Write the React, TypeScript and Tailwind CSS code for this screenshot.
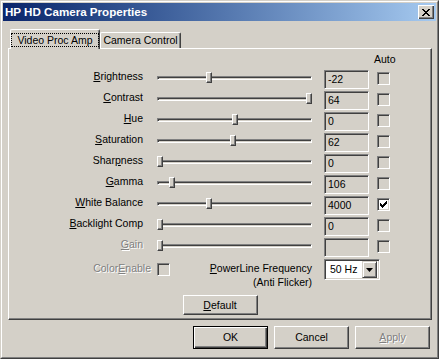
import React from 'react'

type Row = {
  label: React.ReactNode
  value: string
  pos: number
  checked?: boolean
  disabled?: boolean
}

const raised =
  'border border-t-white border-l-white border-r-[#404040] border-b-[#404040] shadow-[inset_-1px_-1px_0_#808080]'
const sunken =
  'border border-t-[#808080] border-l-[#808080] border-r-white border-b-white shadow-[inset_1px_1px_0_#404040,inset_-1px_-1px_0_#d4d0c8]'
const grayText = 'text-[#808080] [text-shadow:1px_1px_0_#fff]'

function U({ children }: { children: React.ReactNode }) {
  return <span className="underline underline-offset-[1px]">{children}</span>
}

const rows: Row[] = [
  { label: <><U>B</U>rightness</>, value: '-22', pos: 0.327 },
  { label: <><U>C</U>ontrast</>, value: '64', pos: 1 },
  { label: <><U>H</U>ue</>, value: '0', pos: 0.5 },
  { label: <><U>S</U>aturation</>, value: '62', pos: 0.487 },
  { label: <>Shar<U>p</U>ness</>, value: '0', pos: 0 },
  { label: <><U>G</U>amma</>, value: '106', pos: 0.08 },
  { label: <><U>W</U>hite Balance</>, value: '4000', pos: 0.33, checked: true },
  { label: <><U>B</U>acklight Comp</>, value: '0', pos: 0 },
  { label: <><U>G</U>ain</>, value: '', pos: 0, disabled: true },
]

const checkPixels = [
  [6], [5, 6], [0, 4, 5, 6], [0, 1, 3, 4, 5], [0, 1, 2, 3, 4], [1, 2, 3], [2],
]

const closePixels = [
  [0, 1, 6, 7], [1, 2, 5, 6], [2, 3, 4, 5], [3, 4], [2, 3, 4, 5], [1, 2, 5, 6], [0, 1, 6, 7],
]

function PixelGlyph({ rows, w }: { rows: number[][]; w: number }) {
  return (
    <svg width={w} height={rows.length} viewBox={`0 0 ${w} ${rows.length}`} shapeRendering="crispEdges">
      {rows.map((xs, y) =>
        xs.map((x) => <rect key={`${x}-${y}`} x={x} y={y} width="1" height="1" fill="#000" />)
      )}
    </svg>
  )
}

function Checkbox({ checked }: { checked?: boolean }) {
  return (
    <div
      className={`w-[13px] h-[13px] flex items-center justify-center ${sunken} ${
        checked ? 'bg-white' : 'bg-[#d4d0c8]'
      }`}
    >
      {checked && <PixelGlyph rows={checkPixels} w={7} />}
    </div>
  )
}

function Slider({ pos }: { pos: number }) {
  return (
    <div className="relative w-[155px] h-[11px] flex items-center">
      <div className="w-full h-[4px] border border-t-[#808080] border-l-[#808080] border-r-white border-b-white shadow-[inset_1px_1px_0_#404040]" />
      <div
        className={`absolute top-0 w-[6px] h-[11px] bg-[#d4d0c8] ${raised}`}
        style={{ left: Math.round(pos * 149) }}
      />
    </div>
  )
}

function Button({
  children,
  isDefault,
  disabled,
  className = '',
}: {
  children: React.ReactNode
  isDefault?: boolean
  disabled?: boolean
  className?: string
}) {
  const frame = isDefault
    ? 'border border-black shadow-[inset_1px_1px_0_#fff,inset_-1px_-1px_0_#404040,inset_-2px_-2px_0_#808080]'
    : raised
  return (
    <div
      className={`w-[75px] flex items-center justify-center bg-[#d4d0c8] ${frame} ${
        disabled ? grayText : ''
      } ${className}`}
    >
      {children}
    </div>
  )
}

export default function App() {
  return (
    <div className="w-[439px] h-[359px] bg-[#d4d0c8] font-['Liberation_Sans',Arial,sans-serif] text-[10.5px] leading-[13px] text-black select-none">
      <div className="w-full h-full border border-t-[#d4d0c8] border-l-[#d4d0c8] border-r-[#404040] border-b-[#404040]">
        <div className="w-full h-full border border-t-white border-l-white border-r-[#808080] border-b-[#808080] p-px flex flex-col">
          {/* title bar */}
          <div className="h-[18px] flex items-center bg-linear-to-r from-[#0a246a] to-[#a6caf0] pl-[2px] pr-[2px]">
            <span className="flex-1 text-white font-bold text-[11.6px] leading-[14px]">
              HP HD Camera Properties
            </span>
            <div className="w-[16px] h-[14px] flex items-center justify-center bg-[#d4d0c8] shadow-[inset_1px_1px_0_#fff,inset_-1px_-1px_0_#404040,inset_-2px_-2px_0_#808080]">
              <PixelGlyph rows={closePixels} w={8} />
            </div>
          </div>

          {/* tabs */}
          <div className="h-[27px] ml-[5px] flex items-end">
            <div className="relative z-10 ml-[2px] -mb-px w-[90px] h-[20px] bg-[#d4d0c8] border-l border-t border-r border-l-white border-t-white border-r-[#404040] rounded-t-[2px] shadow-[inset_-1px_0_0_#808080] pt-[3px]">
              <div className="h-[14px] border border-dotted border-black flex items-center justify-center">
                Video Proc Amp
              </div>
            </div>
            <div className="w-[81px] h-[16px] border-l border-t border-r border-l-white border-t-white border-r-[#404040] rounded-t-[2px] shadow-[inset_-1px_0_0_#808080] flex items-center justify-center">
              Camera Control
            </div>
          </div>

          {/* panel */}
          <div className="h-[272px] w-[424px] ml-[5px] border border-t-white border-l-white border-r-[#404040] border-b-[#404040] shadow-[inset_-1px_-1px_0_#808080] flex flex-col">
            <div className="h-[20px] pt-[4px]">
              <div className="ml-[365px]">Auto</div>
            </div>

            {rows.map((r, i) => (
              <div key={i} className="h-[21px] flex items-start">
                <div className={`w-[134px] text-right mt-px whitespace-nowrap ${r.disabled ? grayText : ''}`}>
                  {r.label}
                </div>
                <div className="ml-[14px] mt-[3px]">
                  <Slider pos={r.pos} />
                </div>
                <div className={`ml-[12px] mt-px w-[45px] h-[19px] pl-[3px] flex items-center bg-[#d4d0c8] ${sunken}`}>
                  {r.value}
                </div>
                <div className="ml-[8px] mt-[3px]">
                  <Checkbox checked={r.checked} />
                </div>
              </div>
            ))}

            <div className="mt-px h-[32px] flex items-start">
              <div className={`w-[142px] text-right mt-[3px] ${grayText}`}>
                Color<U>E</U>nable
              </div>
              <div className="ml-[6px] mt-[4px]">
                <Checkbox />
              </div>
              <div className="w-[142px] text-right mt-[2px] leading-[14px]">
                <div>
                  <U>P</U>owerLine Frequency
                </div>
                <div>(Anti Flicker)</div>
              </div>
              <div className={`ml-[12px] w-[56px] h-[21px] bg-white flex items-center pl-[5px] ${sunken}`}>
                <span className="flex-1">50 Hz</span>
                <div className="w-[15px] h-[17px] mr-[2px] flex items-center justify-center bg-[#d4d0c8] border border-t-[#d4d0c8] border-l-[#d4d0c8] border-r-[#404040] border-b-[#404040] shadow-[inset_1px_1px_0_#fff,inset_-1px_-1px_0_#808080]">
                  <svg width="7" height="4" viewBox="0 0 7 4">
                    <path d="M0 0h7l-3.5 4z" fill="#000" />
                  </svg>
                </div>
              </div>
            </div>

            <div className="mt-[4px] flex justify-center">
              <Button className="h-[20px]">
                <U>D</U>efault
              </Button>
            </div>
          </div>

          {/* dialog buttons */}
          <div className="mt-[6px] pr-[6px] flex justify-end gap-[6px]">
            <Button isDefault className="h-[23px]">
              OK
            </Button>
            <Button className="h-[23px]">Cancel</Button>
            <Button disabled className="h-[23px]">
              <U>A</U>pply
            </Button>
          </div>
        </div>
      </div>
    </div>
  )
}
